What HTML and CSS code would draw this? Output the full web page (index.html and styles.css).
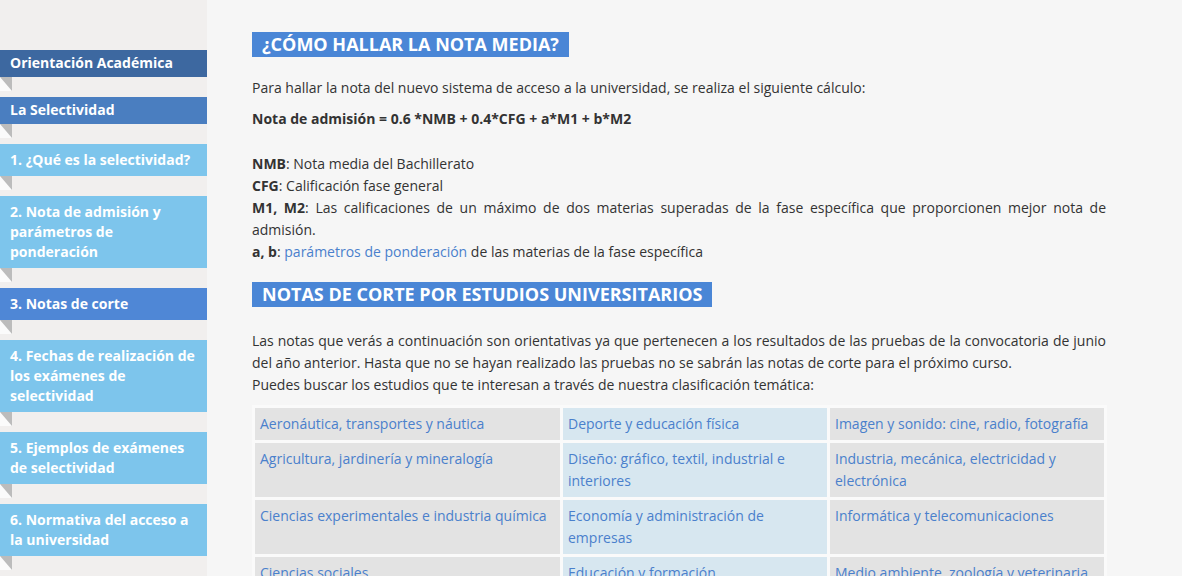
FILE: index.html
```html
<!DOCTYPE html>
<html lang="es">
<head>
<meta charset="utf-8">
<title>Notas de corte</title>
<link rel="stylesheet" href="styles.css">
</head>
<body>
<div class="page">
  <aside class="sidebar">
    <ul class="menu">
      <li class="menu-item"><a class="bar bar-dark bar-short" href="#">Orientación Académica</a></li>
      <li class="menu-item"><a class="bar bar-mid bar-short" href="#">La Selectividad</a></li>
      <li class="menu-item"><a class="bar bar-light" href="#">1. ¿Qué es la selectividad?</a></li>
      <li class="menu-item"><a class="bar bar-light" href="#">2. Nota de admisión y parámetros de ponderación</a></li>
      <li class="menu-item"><a class="bar bar-active" href="#">3. Notas de corte</a></li>
      <li class="menu-item"><a class="bar bar-light" href="#">4. Fechas de realización de los exámenes de selectividad</a></li>
      <li class="menu-item"><a class="bar bar-light" href="#">5. Ejemplos de exámenes de selectividad</a></li>
      <li class="menu-item"><a class="bar bar-light" href="#">6. Normativa del acceso a la universidad</a></li>
    </ul>
  </aside>
  <main class="content">
    <h2 class="title">¿CÓMO HALLAR LA NOTA MEDIA?</h2>
    <p class="text first">Para hallar la nota del nuevo sistema de acceso a la universidad, se realiza el siguiente cálculo:</p>
    <p class="text"><strong>Nota de admisión = 0.6 *NMB + 0.4*CFG + a*M1 + b*M2</strong></p>
    <p class="text defs">
      <strong>NMB</strong>: Nota media del Bachillerato<br>
      <strong>CFG</strong>: Calificación fase general<br>
      <strong>M1, M2</strong>: Las calificaciones de un máximo de dos materias superadas de la fase específica que proporcionen mejor nota de admisión.<br>
      <strong>a, b</strong>: <a class="link" href="#">parámetros de ponderación</a> de las materias de la fase específica
    </p>
    <h2 class="title">NOTAS DE CORTE POR ESTUDIOS UNIVERSITARIOS</h2>
    <p class="text first second">Las notas que verás a continuación son orientativas ya que pertenecen a los resultados de las pruebas de la convocatoria de junio del año anterior. Hasta que no se hayan realizado las pruebas no se sabrán las notas de corte para el próximo curso.<br>Puedes buscar los estudios que te interesan a través de nuestra clasificación temática:</p>
    <table class="areas">
      <tr>
        <td class="c1"><a class="link" href="#">Aeronáutica, transportes y náutica</a></td>
        <td class="c2"><a class="link" href="#">Deporte y educación física</a></td>
        <td class="c3"><a class="link" href="#">Imagen y sonido: cine, radio, fotografía</a></td>
      </tr>
      <tr>
        <td class="c1"><a class="link" href="#">Agricultura, jardinería y mineralogía</a></td>
        <td class="c2"><a class="link" href="#">Diseño: gráfico, textil, industrial e interiores</a></td>
        <td class="c3"><a class="link" href="#">Industria, mecánica, electricidad y electrónica</a></td>
      </tr>
      <tr>
        <td class="c1"><a class="link" href="#">Ciencias experimentales e industria química</a></td>
        <td class="c2"><a class="link" href="#">Economía y administración de empresas</a></td>
        <td class="c3"><a class="link" href="#">Informática y telecomunicaciones</a></td>
      </tr>
      <tr>
        <td class="c1"><a class="link" href="#">Ciencias sociales</a></td>
        <td class="c2"><a class="link" href="#">Educación y formación</a></td>
        <td class="c3"><a class="link" href="#">Medio ambiente, zoología y veterinaria</a></td>
      </tr>
    </table>
  </main>
</div>
</body>
</html>
```
FILE: styles.css
```css
html, body {
  margin: 0;
  padding: 0;
}
body {
  background: #f6f6f6;
  font-family: "Open Sans", "Liberation Sans", sans-serif;
  font-size: 14px;
  color: #333;
  overflow: hidden;
}
.page {
  display: flex;
  align-items: stretch;
  min-height: 576px;
}
.sidebar {
  width: 207px;
  flex: 0 0 207px;
  background: #f1efee;
  padding-top: 50px;
}
.menu {
  list-style: none;
  margin: 0;
  padding: 0;
}
.menu-item {
  margin: 0 0 6px 0;
}
.menu-item::after {
  content: "";
  display: block;
  width: 0;
  height: 0;
  border-top: 14px solid #bcbcbc;
  border-left: 12px solid #fbfbfb;
}
.bar {
  display: block;
  padding: 6px 10px;
  line-height: 20px;
  font-weight: 700;
  font-size: 14px;
  color: #fff;
  text-decoration: none;
}
.bar-short {
  padding: 3px 10px 4px;
}
.bar-dark { background: #3d68a0; }
.bar-mid { background: #4a7ec0; }
.bar-light { background: #7dc5ec; }
.bar-active { background: #4f87d6; }

.content {
  padding: 32px 0 0 45px;
  width: 854px;
}
.title {
  display: inline-block;
  margin: 0;
  padding: 0 10px;
  background: #4a86d6;
  color: #fff;
  font-size: 18px;
  font-weight: 700;
  line-height: 25px;
}
.text {
  margin: 0 0 9px 0;
  line-height: 22px;
  text-align: justify;
}
.text.first {
  margin-top: 20px;
}
.text.second {
  margin-top: 23px;
}
.text strong {
  font-weight: 700;
}
.defs {
  margin-top: 23px;
  margin-bottom: 19px;
}
.link {
  color: #4a80cc;
  text-decoration: none;
}
.areas {
  margin-top: 8px;
  width: 855px;
  border-spacing: 3px;
  margin-left: 0;
  background: #fafafa;
}
.areas td {
  padding: 5px;
  line-height: 22px;
  vertical-align: top;
}
.c1 { width: 295px; background: #e3e3e3; }
.c2 { width: 254px; background: #d7e7f0; }
.c3 { width: 264px; background: #e3e3e3; }
```
